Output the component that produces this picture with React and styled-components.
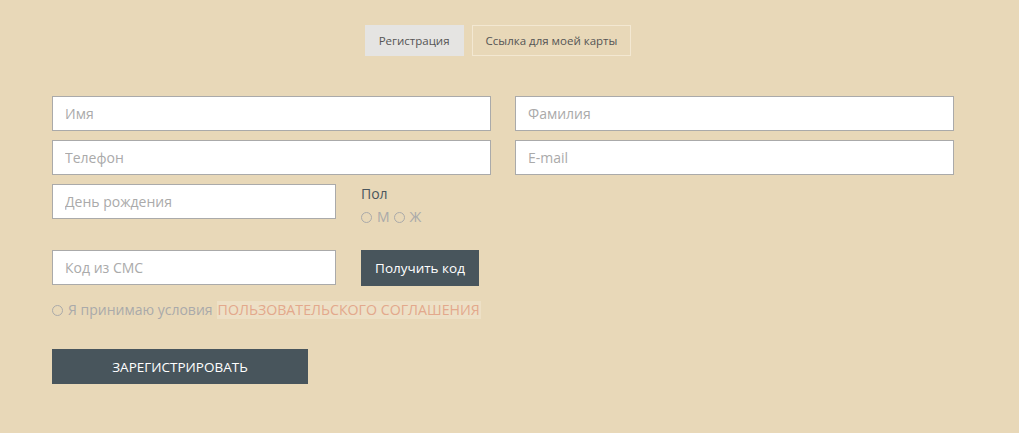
import React from "react";
import styled, { createGlobalStyle } from "styled-components";

const Global = createGlobalStyle`
  html, body { margin: 0; padding: 0; background: #e8d8b8; }
  body { font-family: "Open Sans", "Noto Sans", sans-serif; }
  * { box-sizing: border-box; }
`;

const Page = styled.div`
  width: 1019px;
  height: 433px;
  background: #e8d8b8;
  padding: 25px 0 0 52px;
`;

const Tabs = styled.div`
  display: flex;
  justify-content: center;
  gap: 8px;
  width: 892px;
`;

const Tab = styled.div`
  height: 31px;
  padding: 0 13px;
  display: flex;
  align-items: center;
  font-size: 11.5px;
  color: #555;
  background: ${(p) => (p.$active ? "#e5e4e2" : "transparent")};
  border: 1px solid ${(p) => (p.$active ? "#e5e4e2" : "#f3e8d2")};
`;

const Form = styled.div`
  margin-top: 40px;
  display: flex;
  flex-direction: column;
`;

const Row = styled.div`
  display: flex;
  gap: ${(p) => p.$gap || 24}px;
  margin-bottom: ${(p) => p.$mb ?? 9}px;
  margin-top: ${(p) => p.$mt || 0}px;
  align-items: flex-start;
`;

const Input = styled.input`
  width: ${(p) => p.$w}px;
  height: 35px;
  border: 1px solid #aaaaaa;
  background: #fff;
  padding: 0 12px;
  font-family: "Open Sans", "Noto Sans", sans-serif;
  font-size: 14px;
  color: #444;
  outline: none;
  &::placeholder { color: #aaaaaa; }
`;

const Gender = styled.div`
  display: flex;
  flex-direction: column;
  padding-top: 1px;
`;

const Label = styled.div`
  font-size: 14px;
  color: #4a565d;
  line-height: 18px;
`;

const Radios = styled.div`
  display: flex;
  align-items: center;
  gap: 4px;
  margin-top: 5px;
  font-size: 14px;
  color: #aaa;
  line-height: 18px;
`;

const Circle = styled.span`
  display: inline-block;
  width: 11px;
  height: 11px;
  border: 1px solid #aaa;
  border-radius: 50%;
  margin-right: 1px;
`;

const DarkButton = styled.button`
  width: ${(p) => p.$w}px;
  height: ${(p) => p.$h || 35}px;
  background: #48555c;
  color: #fff;
  border: none;
  font-family: "Open Sans", "Noto Sans", sans-serif;
  font-size: 13.5px;
  padding: 0;
  cursor: pointer;
`;

const Agree = styled.div`
  display: flex;
  align-items: center;
  gap: 4px;
  font-size: 14px;
  color: #aaa;
  margin-top: 4px;
  line-height: 18px;
`;

const AgreeLink = styled.span`
  color: #e3a88c;
  background: #ede0c6;
  padding: 0 1px;
  font-size: 14.2px;
`;

export default function App() {
  return (
    <Page>
      <Global />
      <Tabs>
        <Tab $active>Регистрация</Tab>
        <Tab>Ссылка для моей карты</Tab>
      </Tabs>
      <Form>
        <Row>
          <Input $w={439} placeholder="Имя" />
          <Input $w={439} placeholder="Фамилия" />
        </Row>
        <Row>
          <Input $w={439} placeholder="Телефон" />
          <Input $w={439} placeholder="E-mail" />
        </Row>
        <Row $gap={25} $mb={24}>
          <Input $w={284} placeholder="День рождения" />
          <Gender>
            <Label>Пол</Label>
            <Radios>
              <Circle />М <Circle />Ж
            </Radios>
          </Gender>
        </Row>
        <Row $gap={25} $mb={11}>
          <Input $w={284} placeholder="Код из СМС" />
          <DarkButton $w={118} $h={36}>Получить код</DarkButton>
        </Row>
        <Agree>
          <Circle />
          Я принимаю условия <AgreeLink>ПОЛЬЗОВАТЕЛЬСКОГО СОГЛАШЕНИЯ</AgreeLink>
        </Agree>
        <Row $mb={0} $mt={30}>
          <DarkButton $w={256}>ЗАРЕГИСТРИРОВАТЬ</DarkButton>
        </Row>
      </Form>
    </Page>
  );
}
